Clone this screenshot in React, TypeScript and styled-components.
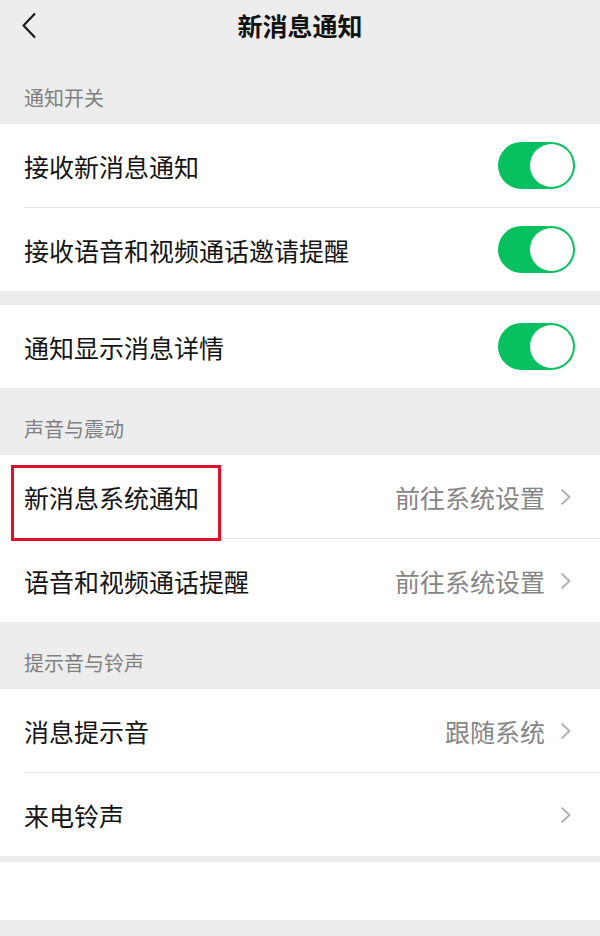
import { FC } from "react";
import styled, { createGlobalStyle } from "styled-components";

const GlobalStyle = createGlobalStyle`
  html, body {
    margin: 0;
    padding: 0;
    background: #ededed;
  }
  body {
    font-family: "Noto Sans CJK SC", "Noto Sans", sans-serif;
  }
`;

const Page = styled.div`
  width: 600px;
  min-height: 936px;
  background: #ededed;
  display: flex;
  flex-direction: column;
`;

const Header = styled.header`
  height: 57px;
  display: flex;
  align-items: flex-start;
  justify-content: center;
  position: relative;
`;

const BackButton = styled.button`
  position: absolute;
  left: 14px;
  top: 6px;
  width: 30px;
  height: 38px;
  padding: 0;
  border: none;
  background: none;
  display: flex;
  align-items: center;
  justify-content: center;
`;

const Title = styled.h1`
  margin: 0;
  font-size: 25px;
  line-height: 50px;
  font-weight: 700;
  color: #111;
`;

const SectionLabel = styled.div`
  padding: 27px 24px 12px;
  font-size: 20px;
  line-height: 28px;
  color: #808080;
`;

const Group = styled.div<{ $gap?: number }>`
  background: #fff;
  margin-top: ${(p) => p.$gap ?? 0}px;
`;

const Row = styled.div`
  position: relative;
  height: 83px;
  display: flex;
  align-items: center;
  padding: 0 25px 0 24px;
  & + & {
    border-top: 1px solid #e5e5e5;
    margin-left: 24px;
    padding-left: 0;
  }
`;

const RowText = styled.span`
  flex: 1;
  font-size: 25px;
  color: #141414;
`;

const Value = styled.span`
  font-size: 25px;
  color: #858585;
  margin-right: 15px;
`;

const Chevron = styled.span`
  display: flex;
  width: 12px;
  margin-right: 3px;
`;

const Switch = styled.span<{ $on: boolean }>`
  position: relative;
  width: 77px;
  height: 47px;
  border-radius: 24px;
  background: ${(p) => (p.$on ? "#07c160" : "#e5e5e5")};
  &::after {
    content: "";
    position: absolute;
    top: 2px;
    ${(p) => (p.$on ? "right: 2px;" : "left: 2px;")}
    width: 43px;
    height: 43px;
    border-radius: 50%;
    background: #fff;
  }
`;

const Highlight = styled.div`
  position: absolute;
  z-index: 2;
  left: 11px;
  top: 10px;
  width: 210px;
  height: 76px;
  box-sizing: border-box;
  border: 3px solid #e0102c;
  pointer-events: none;
`;

const Blank = styled.div`
  background: #fff;
  height: 58px;
  margin-top: 6px;
`;

const ArrowRight: FC = () => (
  <Chevron>
    <svg width="12" height="18" viewBox="0 0 12 18" fill="none">
      <path d="M1.5 1.5 L9.5 9 L1.5 16.5" stroke="#b3b3b3" strokeWidth="2" strokeLinejoin="round" />
    </svg>
  </Chevron>
);

interface ItemProps {
  label: string;
  value?: string;
  toggle?: boolean;
  marked?: boolean;
}

const Item: FC<ItemProps> = ({ label, value, toggle, marked }) => (
  <Row>
    <RowText>{label}</RowText>
    {toggle !== undefined ? (
      <Switch $on={toggle} />
    ) : (
      <>
        {value && <Value>{value}</Value>}
        <ArrowRight />
      </>
    )}
    {marked && <Highlight />}
  </Row>
);

const App: FC = () => (
  <Page>
    <GlobalStyle />
    <Header>
      <BackButton aria-label="返回">
        <svg width="16" height="27" viewBox="0 0 16 27" fill="none">
          <path d="M14 1.5 L2.5 13.5 L14 25.5" stroke="#1a1a1a" strokeWidth="2.2" strokeLinejoin="round" />
        </svg>
      </BackButton>
      <Title>新消息通知</Title>
    </Header>

    <SectionLabel>通知开关</SectionLabel>
    <Group>
      <Item label="接收新消息通知" toggle />
      <Item label="接收语音和视频通话邀请提醒" toggle />
    </Group>
    <Group $gap={14}>
      <Item label="通知显示消息详情" toggle />
    </Group>

    <SectionLabel>声音与震动</SectionLabel>
    <Group>
      <Item label="新消息系统通知" value="前往系统设置" marked />
      <Item label="语音和视频通话提醒" value="前往系统设置" />
    </Group>

    <SectionLabel>提示音与铃声</SectionLabel>
    <Group>
      <Item label="消息提示音" value="跟随系统" />
      <Item label="来电铃声" />
    </Group>

    <Blank />
  </Page>
);

export default App;
